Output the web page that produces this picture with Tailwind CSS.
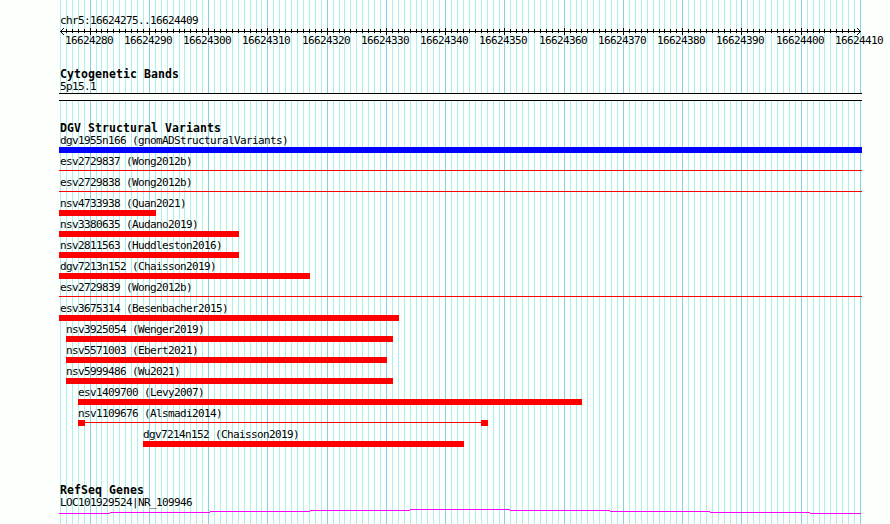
<!DOCTYPE html>
<html lang="en">
<head>
    <meta charset="UTF-8">
    <meta name="viewport" content="width=device-width, initial-scale=1.0">
    <title>chr5:16624275..16624409</title>
    <script src="https://cdn.jsdelivr.net/npm/@tailwindcss/browser@4"></script>
</head>
<body class="bg-[#fdfffc] text-black overflow-hidden">
    <div class="relative w-[890px] h-[524px] overflow-hidden font-['DejaVu_Sans_Mono',monospace] text-[11px] leading-[12px] tracking-[-0.622px] whitespace-nowrap">
        <!-- Grid lines, one per base -->
        <svg id="grid" class="absolute inset-0" width="890" height="524" shape-rendering="crispEdges"></svg>

        <main class="relative flex flex-col pl-[59px] w-[862px]">
            <!-- Ruler -->
            <header class="pt-[15px] h-[68px]">
                <p class="pl-[1px]">chr5:16624275..16624409</p>
                <svg id="ruler" class="block overflow-visible" width="803" height="8" shape-rendering="crispEdges"></svg>
                <div id="numbers" class="relative h-3"></div>
            </header>

            <!-- Cytogenetic bands -->
            <section class="h-[54px]">
                <h2 class="h-[13px] leading-[13px] text-[11.5px] font-bold tracking-[0.077px] pl-[1px]">Cytogenetic Bands</h2>
                <p class="pl-[1px]">5p15.1</p>
                <div class="h-2 border-y border-black bg-[#fdfffc]"></div>
            </section>

            <!-- Structural variants -->
            <section class="h-[362px]">
                <h2 class="h-[13px] leading-[13px] text-[11.5px] font-bold tracking-[0.077px] pl-[1px]">DGV Structural Variants</h2>
                <div id="variants"></div>
            </section>

            <!-- Genes -->
            <section>
                <h2 class="h-[13px] leading-[13px] text-[11.5px] font-bold tracking-[0.077px] pl-[1px]">RefSeq Genes</h2>
                <p class="pl-[1px]">LOC101929524|NR_109946</p>
                <svg class="block" width="803" height="15" shape-rendering="crispEdges" fill="#ff00ff">
                    <rect x="0" y="4" width="51" height="1"/>
                    <rect x="51" y="3" width="100" height="1"/>
                    <rect x="151" y="2" width="100" height="1"/>
                    <rect x="251" y="1" width="100" height="1"/>
                    <rect x="351" y="0" width="100" height="1"/>
                    <rect x="451" y="1" width="100" height="1"/>
                    <rect x="551" y="2" width="100" height="1"/>
                    <rect x="651" y="3" width="100" height="1"/>
                    <rect x="751" y="4" width="51" height="1"/>
                </svg>
            </section>
        </main>
    </div>

    <script>
        const START = 16624275;
        const BASES = 135;
        const xOf = i => Math.round(i * 800 / BASES) + 1;

        let grid = '', ticks = '', numbers = '';
        for (let i = 0; i <= BASES; i++) {
            const major = (START + i) % 10 === 0;
            const x = xOf(i);
            grid += `<rect x="${x + 59}" y="0" width="1" height="524" fill="${major ? '#87ceeb' : '#afeeee'}"/>`;
            if (i > 0 && i < BASES) {
                ticks += `<rect x="${x}" y="${major ? 1 : 2}" width="1" height="${major ? 7 : 4}"/>`;
            }
            if (major) {
                numbers += `<span class="absolute top-0" style="left:${x - 25}px">${START + i}</span>`;
            }
        }
        document.getElementById('grid').innerHTML = grid;
        document.getElementById('ruler').innerHTML =
            `<rect x="1" y="4" width="801" height="1"/>${ticks}` +
            '<path d="M2 3h1v-1h1v-1h1v1h-1v1h-1v1h-1zM2 5h1v1h1v1h1v1h-1v-1h-1v-1h-1z"/>' +
            '<path d="M801 3h-1v-1h-1v-1h-1v1h1v1h1v1h1zM801 5h-1v1h-1v1h-1v1h1v-1h1v-1h1z"/>';
        document.getElementById('numbers').innerHTML = numbers;

        // name, start x, width, kind
        const variants = [
            ['dgv1955n166 (gnomADStructuralVariants)', 0, 803, 'gain'],
            ['esv2729837 (Wong2012b)', 0, 803, 'line'],
            ['esv2729838 (Wong2012b)', 0, 803, 'line'],
            ['nsv4733938 (Quan2021)', 0, 97, 'bar'],
            ['nsv3380635 (Audano2019)', 0, 180, 'bar'],
            ['nsv2811563 (Huddleston2016)', 0, 180, 'bar'],
            ['dgv7213n152 (Chaisson2019)', 0, 251, 'bar'],
            ['esv2729839 (Wong2012b)', 0, 803, 'line'],
            ['esv3675314 (Besenbacher2015)', 0, 340, 'bar'],
            ['nsv3925054 (Wenger2019)', 7, 327, 'bar'],
            ['nsv5571003 (Ebert2021)', 7, 321, 'bar'],
            ['nsv5999486 (Wu2021)', 7, 327, 'bar'],
            ['esv1409700 (Levy2007)', 19, 504, 'bar'],
            ['nsv1109676 (Alsmadi2014)', 19, 410, 'ends'],
            ['dgv7214n152 (Chaisson2019)', 84, 321, 'bar']
        ];
        const shapes = {
            gain: '<div class="h-[6px] bg-[#0000ff]"></div>',
            bar: '<div class="h-[6px] bg-[#ff0000]"></div>',
            line: '<div class="h-[6px] pt-[2px]"><div class="h-px bg-[#ff0000]"></div></div>',
            ends: '<div class="h-[6px] flex"><div class="w-[7px] bg-[#ff0000]"></div><div class="grow h-px mt-[2px] bg-[#ff0000]"></div><div class="w-[7px] bg-[#ff0000]"></div></div>'
        };
        document.getElementById('variants').innerHTML = variants.map(([name, x, width, kind]) =>
            `<div class="h-[21px]" style="margin-left:${x}px;width:${width}px"><p class="h-3 ${x ? '' : 'pl-[1px]'}">${name}</p>${shapes[kind]}</div>`
        ).join('');
    </script>
</body>
</html>
